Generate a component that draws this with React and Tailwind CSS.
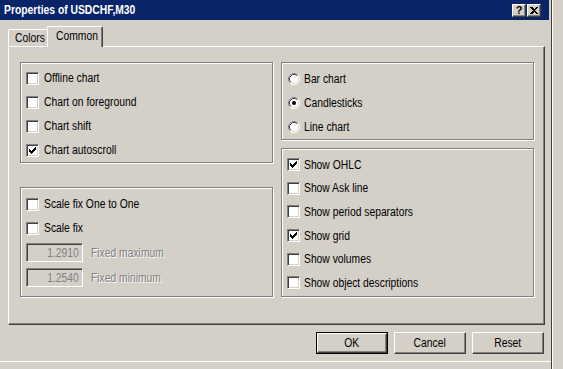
import React from 'react';

const leftTop = [
  { label: 'Offline chart', on: false },
  { label: 'Chart on foreground', on: false },
  { label: 'Chart shift', on: false },
  { label: 'Chart autoscroll', on: true },
];

const chartTypes = [
  { label: 'Bar chart', on: false },
  { label: 'Candlesticks', on: true },
  { label: 'Line chart', on: false },
];

const showOpts = [
  { label: 'Show OHLC', on: true },
  { label: 'Show Ask line', on: false },
  { label: 'Show period separators', on: false },
  { label: 'Show grid', on: true },
  { label: 'Show volumes', on: false },
  { label: 'Show object descriptions', on: false },
];

// narrow text, the capture is squeezed sideways
function Txt({ children, className = '' }) {
  return <span className={`inline-block origin-left scale-x-[0.86] whitespace-nowrap ${className}`}>{children}</span>;
}

function CheckBox({ on }) {
  return (
    <div className="w-[13px] h-[13px] shrink-0 bg-white border border-t-[#808080] border-l-[#808080] border-r-white border-b-white shadow-[inset_1px_1px_0_#404040,inset_-1px_-1px_0_#d4d0c8] flex items-center justify-center">
      {on && (
        <svg width="7" height="7" viewBox="0 0 7 7" shapeRendering="crispEdges">
          <path d="M0 2h1v1h1v1h1V3h1V2h1V1h1V0h1v3H6v1H5v1H4v1H3v1H2V6H1V5H0z" fill="#000" />
        </svg>
      )}
    </div>
  );
}

function Radio({ on }) {
  return (
    <svg width="12" height="12" viewBox="0 0 12 12" className="shrink-0">
      <circle cx="6" cy="6" r="5.5" fill="#fff" />
      <path d="M2.11 9.89A5.5 5.5 0 0 1 9.89 2.11" stroke="#808080" fill="none" />
      <path d="M9.89 2.11A5.5 5.5 0 0 1 2.11 9.89" stroke="#fff" fill="none" />
      <path d="M2.82 9.18A4.5 4.5 0 0 1 9.18 2.82" stroke="#404040" fill="none" />
      <path d="M9.18 2.82A4.5 4.5 0 0 1 2.82 9.18" stroke="#d4d0c8" fill="none" />
      {on && <circle cx="6" cy="6" r="2" fill="#000" />}
    </svg>
  );
}

function Group({ className, children }) {
  return (
    <div className={`border border-[#808080] shadow-[inset_1px_1px_0_#fff,1px_1px_0_#fff] ${className}`}>
      {children}
    </div>
  );
}

function Field({ value, label }) {
  return (
    <div className="h-[25px] flex items-center gap-[8px]">
      <div className="w-[57px] h-[19px] bg-[#d4d0c8] border border-t-[#808080] border-l-[#808080] border-r-white border-b-white shadow-[inset_1px_1px_0_#404040,inset_-1px_-1px_0_#d4d0c8] flex items-center justify-end pr-[3px] text-[#808080]">
        <span className="inline-block origin-right scale-x-[0.86]">{value}</span>
      </div>
      <Txt className="text-[#808080] [text-shadow:1px_1px_0_#fff]">{label}</Txt>
    </div>
  );
}

function Btn({ children, primary }) {
  return (
    <div className={primary ? 'border border-black' : ''}>
      <div
        className={`${primary ? 'w-[70px] h-[20px]' : 'w-[72px] h-[22px]'} bg-[#d4d0c8] border border-t-white border-l-white border-r-[#404040] border-b-[#404040] shadow-[inset_-1px_-1px_0_#808080] flex items-center justify-center`}
      >
        <span className="inline-block scale-x-[0.86]">{children}</span>
      </div>
    </div>
  );
}

function TitleBtn({ children }) {
  return (
    <div className="w-[14px] h-[13px] bg-[#d4d0c8] border border-t-white border-l-white border-r-[#404040] border-b-[#404040] shadow-[inset_-1px_-1px_0_#808080] flex items-center justify-center text-[11px] font-bold leading-none text-black">
      {children}
    </div>
  );
}

export default function App() {
  return (
    <div className="w-[563px] h-[369px] bg-[#d4d0c8] flex overflow-hidden font-['Liberation_Sans',Arial,sans-serif] text-[12px] text-black">
      <div className="w-[552px] shrink-0 flex flex-col border-r border-[#404040]">
        {/* title bar */}
        <div className="h-[20px] mr-[2px] bg-[#0a246a] flex items-center pl-[4px] pr-[8px]">
          <Txt className="text-white font-bold text-[12px]">Properties of USDCHF,M30</Txt>
          <div className="ml-auto flex gap-[1px]">
            <TitleBtn>?</TitleBtn>
            <TitleBtn>
              <svg width="8" height="7" viewBox="0 0 8 7" shapeRendering="crispEdges">
                <path d="M0 0h2l2 2 2-2h2L5 3.5 8 7H6L4 5 2 7H0l3-3.5z" fill="#000" />
              </svg>
            </TitleBtn>
          </div>
        </div>

        {/* tabs */}
        <div className="h-[26px] pl-[8px] flex items-end">
          <div className="w-[41px] h-[17px] pl-[6px] flex items-center border-t border-l border-white rounded-tl-[2px]">
            <Txt>Colors</Txt>
          </div>
          <div className="relative z-10 -mb-px w-[56px] h-[21px] -ml-[2px] pl-[8px] bg-[#d4d0c8] flex items-center border-t border-l border-t-white border-l-white border-r border-r-[#404040] shadow-[inset_-1px_0_0_#808080] rounded-t-[2px]">
            <Txt className="-mt-[3px]">Common</Txt>
          </div>
        </div>

        {/* tab page */}
        <div className="ml-[8px] w-[537px] h-[279px] border border-t-white border-l-white border-r-[#404040] border-b-[#404040] shadow-[inset_-1px_-1px_0_#808080] pt-[15px] pl-[11px] flex gap-[8px]">
          <div className="w-[253px] flex flex-col gap-[24px]">
            <Group className="h-[101px] pt-[3px] pl-[5px]">
              {leftTop.map((o) => (
                <div key={o.label} className="h-[24px] flex items-center gap-[5px]">
                  <CheckBox on={o.on} />
                  <Txt>{o.label}</Txt>
                </div>
              ))}
            </Group>
            <Group className="h-[110px] pt-[4px] pl-[5px]">
              <div className="h-[24px] flex items-center gap-[5px]">
                <CheckBox on={false} />
                <Txt>Scale fix One to One</Txt>
              </div>
              <div className="h-[24px] flex items-center gap-[5px]">
                <CheckBox on={false} />
                <Txt>Scale fix</Txt>
              </div>
              <Field value="1.2910" label="Fixed maximum" />
              <Field value="1.2540" label="Fixed minimum" />
            </Group>
          </div>
          <div className="w-[253px] flex flex-col gap-[8px]">
            <Group className="h-[78px] pt-[4px] pl-[6px]">
              {chartTypes.map((o) => (
                <div key={o.label} className="h-[24px] flex items-center gap-[4px]">
                  <Radio on={o.on} />
                  <Txt>{o.label}</Txt>
                </div>
              ))}
            </Group>
            <Group className="h-[149px] pt-[4px] pl-[5px]">
              {showOpts.map((o) => (
                <div key={o.label} className="h-[23.6px] flex items-center gap-[4px]">
                  <CheckBox on={o.on} />
                  <Txt>{o.label}</Txt>
                </div>
              ))}
            </Group>
          </div>
        </div>

        {/* buttons */}
        <div className="mt-[7px] pr-[7px] flex justify-end gap-[6px]">
          <Btn primary>OK</Btn>
          <Btn>Cancel</Btn>
          <Btn>Reset</Btn>
        </div>
        <div className="mt-[7px] h-px bg-white" />
      </div>
      <div className="w-px bg-white shrink-0" />
      <div className="flex-1" />
    </div>
  );
}
